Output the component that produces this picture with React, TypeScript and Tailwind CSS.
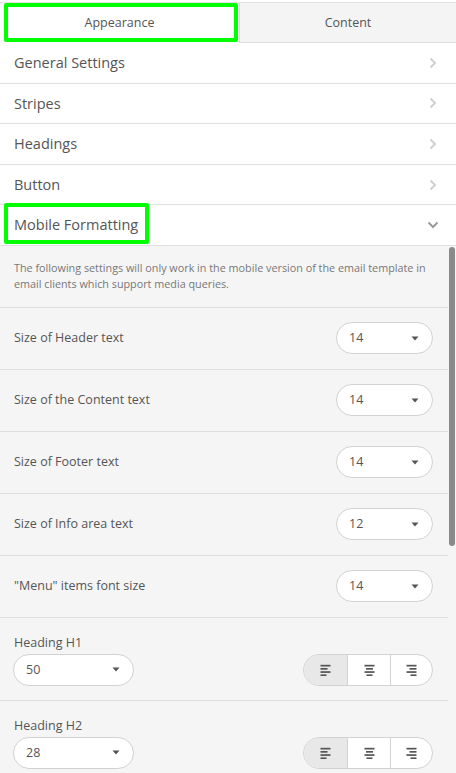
import React from 'react';

const accordion = ['General Settings', 'Stripes', 'Headings', 'Button'];

const sizes = [
  { label: 'Size of Header text', value: '14' },
  { label: 'Size of the Content text', value: '14' },
  { label: 'Size of Footer text', value: '14' },
  { label: 'Size of Info area text', value: '12' },
  { label: '"Menu" items font size', value: '14' },
];

const headings = [
  { label: 'Heading H1', value: '50' },
  { label: 'Heading H2', value: '28' },
];

const Caret = () => (
  <svg width="8" height="5" viewBox="0 0 8 5" className="shrink-0">
    <path d="M0.5 0.5h7L4 4.5z" fill="#555" />
  </svg>
);

const Chevron = ({ down }: { down?: boolean }) =>
  down ? (
    <svg width="12" height="8" viewBox="0 0 12 8">
      <path d="M1.5 1.5l4.5 4.5 4.5-4.5" fill="none" stroke="#9a9a9a" strokeWidth="2" />
    </svg>
  ) : (
    <svg width="8" height="12" viewBox="0 0 8 12">
      <path d="M1.5 1.5l4.5 4.5-4.5 4.5" fill="none" stroke="#d0d0d0" strokeWidth="2" />
    </svg>
  );

const Select = ({ value, width }: { value: string; width: string }) => (
  <div
    className={`${width} h-[32px] rounded-full border border-[#d2d2d2] bg-white flex items-center justify-between pl-[12px] pr-[13px] text-[12.5px] text-[#555]`}
  >
    <span>{value}</span>
    <Caret />
  </div>
);

const AlignIcon = ({ kind }: { kind: 'left' | 'center' | 'right' }) => {
  const lines = [10, 7, 10, 6];
  return (
    <svg width="11" height="12" viewBox="0 0 11 12">
      {lines.map((w, i) => {
        const x = kind === 'left' ? 0.5 : kind === 'right' ? 10.5 - w : (11 - w) / 2;
        return <rect key={i} x={x} y={0.8 + i * 3.2} width={w} height="1.7" fill="#555" />;
      })}
    </svg>
  );
};

const AlignGroup = () => (
  <div className="flex h-[32px] rounded-full border border-[#d2d2d2] overflow-hidden bg-white">
    <div className="w-[44px] flex items-center justify-center bg-[#e8e8e8] border-r border-[#d2d2d2]">
      <AlignIcon kind="left" />
    </div>
    <div className="w-[43px] flex items-center justify-center border-r border-[#d2d2d2]">
      <AlignIcon kind="center" />
    </div>
    <div className="w-[41px] flex items-center justify-center">
      <AlignIcon kind="right" />
    </div>
  </div>
);

export default function App() {
  return (
    <div className="w-[456px] h-[773px] overflow-hidden bg-white font-['Open_Sans',sans-serif] text-[#555] flex flex-col">
      <div className="h-[2px] shrink-0" />
      <div className="flex h-[41px] shrink-0 border-t border-[#e2e2e2]">
        <div className="relative w-[239px] bg-white flex items-center justify-center text-[12.5px] pt-[1px]">
          Appearance
          <div className="absolute left-[4px] top-0 w-[234px] h-[39px] border-[4px] border-[#00ff00] rounded-[2px]" />
        </div>
        <div className="flex-1 bg-[#f4f4f4] border-l border-b border-[#dcdcdc] flex items-center justify-center text-[12.5px] pt-[1px]">
          Content
        </div>
      </div>

      {accordion.map((t) => (
        <div
          key={t}
          className="h-[40.6px] shrink-0 border-b border-[#e0e0e0] flex items-center justify-between pl-[14px] pr-[19px] text-[14.5px]"
        >
          <span>{t}</span>
          <Chevron />
        </div>
      ))}
      <div className="relative h-[40.6px] shrink-0 border-b border-[#e0e0e0] flex items-center justify-between pl-[14px] pr-[17px] text-[14.5px]">
        <span>Mobile Formatting</span>
        <Chevron down />
        <div className="absolute left-[4px] top-[-2px] w-[145px] h-[41px] border-[4px] border-[#00ff00] rounded-[2px]" />
      </div>

      <div className="relative flex-1 bg-[#f5f5f5] overflow-hidden">
        <div className="w-[448px]">
          <div className="pl-[14px] pr-[6px] pt-[14px] pb-[15px] border-b border-[#dedede] text-[10.8px] leading-[16px] text-[#777]">
            The following settings will only work in the mobile version of the email template in email clients which
            support media queries.
          </div>
          {sizes.map((s) => (
            <div
              key={s.label}
              className="h-[62px] border-b border-[#dedede] flex items-center justify-between pl-[14px] pr-[15px] text-[12.5px]"
            >
              <span>{s.label}</span>
              <Select value={s.value} width="w-[97px]" />
            </div>
          ))}
          {headings.map((h) => (
            <div key={h.label} className="border-b border-[#dedede] pl-[13px] pr-[15px] pt-[16px] pb-[14px]">
              <div className="pl-[1px] text-[12.5px] leading-[18px]">{h.label}</div>
              <div className="mt-[2px] flex items-center justify-between">
                <Select value={h.value} width="w-[121px]" />
                <AlignGroup />
              </div>
            </div>
          ))}
        </div>
        <div className="absolute right-[1px] top-[1px] w-[6px] h-[299px] rounded-full bg-[#8a8a8a]" />
      </div>
    </div>
  );
}
